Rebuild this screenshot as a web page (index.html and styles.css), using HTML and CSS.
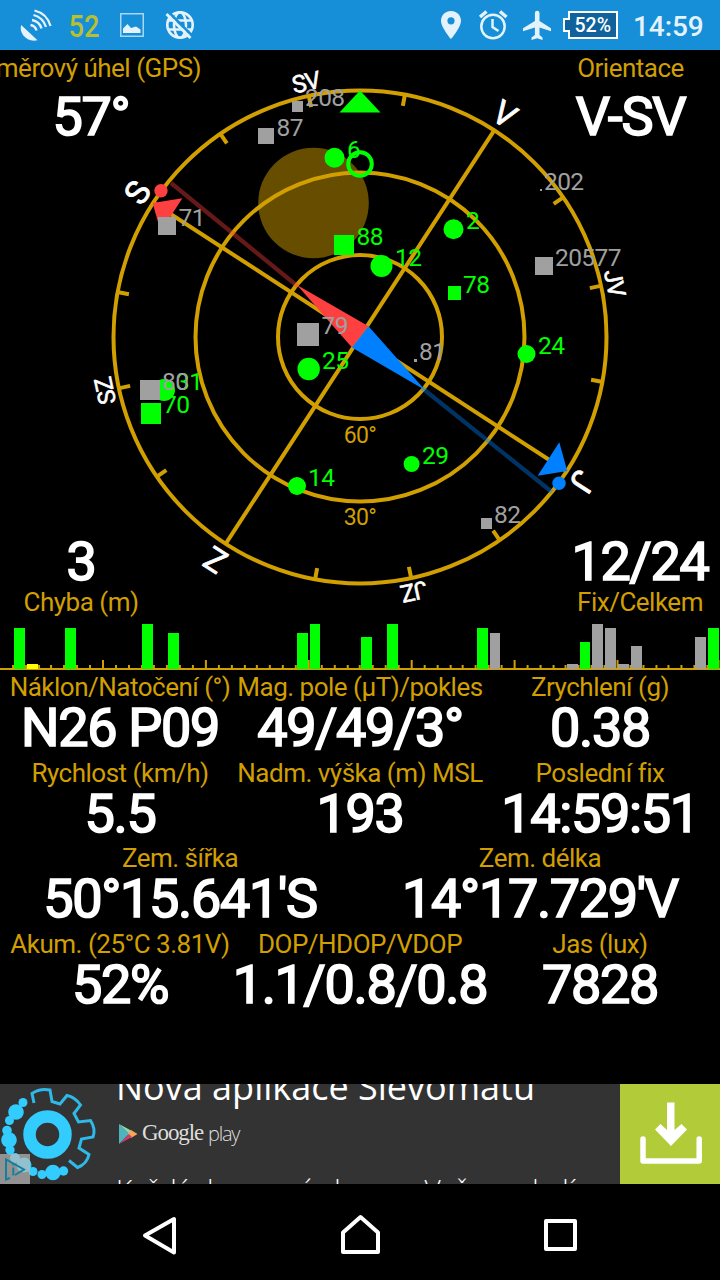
FILE: index.html
```html
<!DOCTYPE html>
<html lang="cs">
<head>
<meta charset="utf-8">
<title>GPS Status</title>
<link rel="stylesheet" href="styles.css">
</head>
<body>
<div class="screen">
  <header class="status-bar">
    <div class="notifications">
      <svg class="cell" viewBox="0 0 48 50">
        <path class="icon-fill" d="M9.200 25C6.500 33 15 43 25.500 40.200Z"/>
        <g class="icon-line arcs">
          <path d="M22.500 10.500Q35 13.500 38.500 26"/>
          <path d="M21.500 15Q31 17.500 34 27"/>
          <path d="M20 20Q27.500 21.500 29.500 28.500"/>
          <path d="M18.500 25Q23.500 26 24.500 30.500"/>
        </g>
      </svg>
      <svg class="cell" viewBox="0 0 48 50">
        <text class="level" x="8.500" y="37" textLength="31" lengthAdjust="spacingAndGlyphs">52</text>
      </svg>
      <svg class="cell" viewBox="0 0 48 50">
        <rect class="frame" x="12.750" y="13.750" width="22.500" height="22.500"/>
        <path class="icon-fill" d="M15 33V28.500L19.500 24L23 28L28 26.500L32.500 29.500V33Z"/>
      </svg>
      <svg class="cell" viewBox="0 0 48 50">
        <g class="icon-line globe">
          <circle cx="24" cy="25" r="12.700"/>
          <ellipse cx="24" cy="25" rx="6" ry="12.700"/>
          <path d="M12.500 20.500H35.500M12.500 29.500H35.500"/>
        </g>
        <path class="slash-gap" d="M12.500 12L36.500 36"/>
        <path class="slash" d="M10.500 14L34.500 38"/>
      </svg>
    </div>
    <div class="indicators">
      <svg class="cell-s" viewBox="0 0 42 50">
        <path class="icon-fill" fill-rule="evenodd" d="M21 11C15.300 11 11 15.300 11 20.700C11 27.500 21 39 21 39S31 27.500 31 20.700C31 15.300 26.700 11 21 11ZM21 17.200A3.600 3.600 0 1 1 21 24.400A3.600 3.600 0 1 1 21 17.200Z"/>
      </svg>
      <svg class="cell-s" viewBox="0 0 42 50">
        <g class="icon-line alarm">
          <circle cx="21" cy="26.500" r="11.700"/>
          <path d="M20.500 19V27L26.500 31"/>
          <path class="bells" d="M8 17L14.500 11.500M28 11.500L34.500 17"/>
        </g>
      </svg>
      <svg class="cell-m" viewBox="0 0 46 50">
        <path class="icon-fill" d="M37 31.200V28.300L25.500 21V13A2.300 2.300 0 0 0 20.900 13V21L9 28.300V31.200L20.900 27.500V35L17.500 37.500V40L23.200 38.300L28.500 40V37.500L25.500 35V27.500Z"/>
      </svg>
      <svg class="cell-l" viewBox="0 0 62 50">
        <path class="battery" d="M9 12H57V38H9V31H4V19H9Z"/>
        <text class="battery-text" x="14.500" y="32" textLength="36.500" lengthAdjust="spacingAndGlyphs">52%</text>
      </svg>
      <time class="clock">14:59</time>
    </div>
  </header>

  <section class="compass">
    <svg class="dial" viewBox="0 50 720 570">
      <circle class="sun-disc" cx="313.500" cy="203" r="55.300"/>
      <g class="ring">
        <circle cx="360" cy="337" r="246.500"/>
        <circle cx="360" cy="337" r="164.500"/>
        <circle cx="360" cy="337" r="82"/>
      </g>
      <g class="ring" transform="translate(360 337)">
        <path transform="rotate(33)" d="M0-247V247M-247 0H247"/>
        <path transform="rotate(-34.500)" d="M0-247V-235M0 247V235M-247 0H-235M247 0H235"/>
        <path transform="rotate(-12)" d="M0-247V-235M0 247V235M-247 0H-235M247 0H235"/>
        <path transform="rotate(10.500)" d="M0-247V-235M0 247V235M-247 0H-235M247 0H235"/>
      </g>
      <g class="cardinal" transform="translate(360 337)">
        <text transform="rotate(-57)" y="-254">S</text>
        <text transform="rotate(33)" y="-254">V</text>
        <text transform="rotate(123)" y="-254">J</text>
        <text transform="rotate(213)" y="-254">Z</text>
      </g>
      <g class="cardinal minor" transform="translate(360 337)">
        <text transform="rotate(-12)" y="-252">SV</text>
        <text transform="rotate(78)" y="-252">JV</text>
        <text transform="rotate(168)" y="-252">JZ</text>
        <text transform="rotate(258)" y="-252">SZ</text>
      </g>
      <g class="elevation">
        <text x="360" y="442.500">60°</text>
        <text x="360" y="524.500">30°</text>
      </g>
      <path class="beam red" d="M171 183L298 286.500"/>
      <path class="beam blue" d="M422 388L552 492"/>
      <path class="north" d="M297 285L368.500 326.300L352 347.500Z"/>
      <path class="south" d="M425 390L368.500 326.300L352 347.500Z"/>
      <path class="north" d="M152.700 203L182.300 198.300L160.700 231.700Z"/>
      <path class="south" d="M567.300 471L537.700 475.700L559.300 442.300Z"/>
      <circle class="north" cx="161" cy="190.700" r="6.700"/>
      <circle class="south" cx="559" cy="483.300" r="6.700"/>
      <g class="sat on">
        <path d="M360 90.500L380.500 112.500H339.500Z"/>
        <circle class="target" cx="360" cy="164" r="11.800"/>
        <circle cx="334.500" cy="157.700" r="10"/><text x="347" y="158">6</text>
        <rect x="334" y="235" width="20" height="20"/><text x="356.500" y="245.300">88</text>
        <circle cx="381.500" cy="266" r="11"/><text x="395" y="266">12</text>
        <circle cx="453.500" cy="229.200" r="10"/><text x="466" y="229.200">2</text>
        <rect x="448" y="286" width="13" height="14"/><text x="463" y="293">78</text>
        <circle cx="526.500" cy="354" r="9"/><text x="538" y="354.300">24</text>
        <circle cx="308.700" cy="369" r="11.200"/><text x="322" y="369">25</text>
        <circle cx="164" cy="390" r="11"/><text x="176" y="390">31</text>
        <rect x="141" y="403" width="20" height="21"/><text x="163" y="413.300">70</text>
        <circle cx="297" cy="486" r="9"/><text x="308" y="486">14</text>
        <circle cx="411.600" cy="464" r="8"/><text x="422" y="464">29</text>
      </g>
      <g class="sat off">
        <rect x="292" y="101" width="11" height="11"/><text x="305" y="106">208</text>
        <rect x="258" y="128" width="16" height="16"/><text x="276.500" y="136.200">87</text>
        <rect x="158" y="217" width="18" height="18"/><text x="178.500" y="226.300">71</text>
        <rect x="540" y="189" width="2" height="2"/><text x="544" y="190">202</text>
        <rect x="535" y="257" width="18" height="18"/><text x="555" y="266">20577</text>
        <rect x="297" y="323" width="22" height="23"/><text x="321.500" y="334">79</text>
        <rect x="414" y="359" width="3" height="3"/><text x="419" y="360">81</text>
        <rect x="140" y="380" width="20" height="20"/><text x="162" y="390">80</text>
        <rect x="481" y="518" width="11" height="11"/><text x="494" y="523.300">82</text>
      </g>
    </svg>
    <div class="corner top-left"><span class="label">Směrový úhel (GPS)</span><span class="value">57°</span></div>
    <div class="corner top-right"><span class="label">Orientace</span><span class="value">V-SV</span></div>
    <div class="corner bottom-left"><span class="value">3</span><span class="label">Chyba (m)</span></div>
    <div class="corner bottom-right"><span class="value">12/24</span><span class="label">Fix/Celkem</span></div>
  </section>

  <svg class="signal" viewBox="0 620 720 50" shape-rendering="crispEdges">
    <defs>
      <pattern id="ticks" x="102" y="620" width="102.900" height="50" patternUnits="userSpaceOnUse">
        <path class="tick" d="M0 40h2v10h-2zM12.800 45h2v5h-2zM25.700 45h2v5h-2zM38.500 45h2v5h-2zM51.400 45h2v5h-2zM64.300 45h2v5h-2zM77.200 45h2v5h-2zM90 45h2v5h-2z"/>
      </pattern>
    </defs>
    <rect x="4" y="620" width="716" height="50" fill="url(#ticks)"/>
    <rect class="tick" x="0" y="668" width="720" height="2"/>
    <path class="bar-on" d="M14 628h11v41h-11zM65 628h11v41h-11zM142 624h11v45h-11zM168 633h11v36h-11zM297 633h11v36h-11zM310 624h10v45h-10zM361 637h11v32h-11zM387 624h11v45h-11zM477 628h11v41h-11zM580 642h10v27h-10zM708 628h11v41h-11z"/>
    <path class="bar-weak" d="M27 664h11v5h-11z"/>
    <path class="bar-off" d="M490 633h10v36h-10zM567 664h11v5h-11zM592 624h11v45h-11zM605 628h11v41h-11zM618 664h11v5h-11zM631 646h11v23h-11zM695 637h11v32h-11z"/>
  </svg>

  <section class="readouts">
    <div class="row">
      <div class="item"><span class="label">Náklon/Natočení (°)</span><span class="value">N26 P09</span></div>
      <div class="item"><span class="label">Mag. pole (μT)/pokles</span><span class="value">49/49/3°</span></div>
      <div class="item"><span class="label">Zrychlení (g)</span><span class="value">0.38</span></div>
    </div>
    <div class="row">
      <div class="item"><span class="label">Rychlost (km/h)</span><span class="value">5.5</span></div>
      <div class="item"><span class="label">Nadm. výška (m) MSL</span><span class="value">193</span></div>
      <div class="item"><span class="label">Poslední fix</span><span class="value">14:59:51</span></div>
    </div>
    <div class="row">
      <div class="item"><span class="label">Zem. šířka</span><span class="value">50°15.641'S</span></div>
      <div class="item"><span class="label">Zem. délka</span><span class="value">14°17.729'V</span></div>
    </div>
    <div class="row">
      <div class="item"><span class="label">Akum. (25°C 3.81V)</span><span class="value">52%</span></div>
      <div class="item"><span class="label">DOP/HDOP/VDOP</span><span class="value">1.1/0.8/0.8</span></div>
      <div class="item"><span class="label">Jas (lux)</span><span class="value">7828</span></div>
    </div>
  </section>

  <aside class="ad">
    <svg class="ad-gear" viewBox="0 0 105 100">
      <circle class="hub" cx="47.500" cy="50.500" r="18"/>
      <path class="teeth" d="M34 19L32 9.500Q40 4 50 6L52 17.500L60 20L67 11.500Q75 13 80.500 21L74 29.500L78.500 38L90.500 36.500Q96 45 93 53L81.500 55L79 64L89 70.500Q87 80 77.500 83.500L69 76.500"/>
      <g class="beads">
        <circle cx="23" cy="18.500" r="4.500"/><circle cx="16" cy="28" r="7.800"/><circle cx="9.500" cy="36.500" r="4.500"/>
        <circle cx="7" cy="46.500" r="4.800"/><circle cx="9" cy="56" r="7.800"/><circle cx="10" cy="66" r="4.700"/>
        <circle cx="15" cy="74" r="5"/><circle cx="24" cy="81" r="7.500"/><circle cx="33" cy="87.500" r="4.500"/>
        <circle cx="42" cy="90.500" r="4.500"/><circle cx="53" cy="88.500" r="7.800"/><circle cx="63.500" cy="87" r="4.700"/>
      </g>
      <rect class="adchoices" x="0" y="70" width="30" height="30"/>
      <path class="adchoices-mark" d="M10 94L6 95.500V75.500L24 85.500L15 91M13.300 83.500V91.500M13.300 79.500V81.500"/>
    </svg>
    <div class="ad-body">
      <div class="ad-title">Nová aplikace Slevomatu</div>
      <div class="play">
        <svg class="play-mark" viewBox="0 0 20 22">
          <path fill="#4cb4bd" d="M1 1V21L11 11Z"/>
          <path fill="#8fd6ad" d="M1 1L14 8L11 11Z"/>
          <path fill="#f9a65a" d="M13 7L19.500 11L13 15L10 11Z"/>
          <path fill="#d23a6c" d="M1 21L11 11L14 14Z"/>
        </svg>
        <span class="play-google">Google</span><span class="play-word">play</span>
      </div>
      <div class="ad-text">Každý den nové slevy ve Vašem okolí</div>
    </div>
    <svg class="ad-button" viewBox="0 0 100 100">
      <path class="tray" d="M23 55V77H79.200V55"/>
      <path class="icon-arrow" d="M47 18.500H54.500V46L61.500 40L67 45.500L51 62L35 45.500L40.500 40L47 46Z"/>
    </svg>
  </aside>

  <nav class="nav-bar">
    <svg viewBox="0 0 60 60"><path d="M15 31.500L44 15V48.500Z"/></svg>
    <svg viewBox="0 0 60 60"><path d="M13 48V28.500L30.500 13L48 28.500V48Z"/></svg>
    <svg viewBox="0 0 60 60"><path d="M16 17H45V45H16Z"/></svg>
  </nav>
</div>
</body>
</html>
```

FILE: styles.css
```css
* { box-sizing: border-box; }
body { margin: 0; background: #000; font-family: Roboto, "Noto Sans", sans-serif; }
.screen { width: 720px; height: 1280px; overflow: hidden; display: flex; flex-direction: column; background: #000; }
svg { display: block; flex: none; }

.status-bar { height: 50px; display: flex; justify-content: space-between; background: #168ed8; padding-left: 12px; }
.notifications, .indicators { display: flex; }
.indicators { width: 290px; }
.cell { width: 48px; height: 50px; }
.cell-s { width: 42px; height: 50px; }
.cell-m { width: 46px; height: 50px; }
.cell-l { width: 62px; height: 50px; }
.icon-fill { fill: #e4f3fb; }
.icon-line { fill: none; stroke: #e4f3fb; }
.arcs { stroke-width: 2.300; }
.globe { stroke-width: 2.600; }
.alarm { stroke-width: 2.500; }
.bells { stroke-width: 3.500; }
.frame { fill: none; stroke: #a9d6f1; stroke-width: 1.500; }
.slash-gap { stroke: #168ed8; stroke-width: 2.500; }
.slash { stroke: #e4f3fb; stroke-width: 2.800; }
.level { font-size: 32px; font-weight: 500; fill: #b8bf30; }
.battery { fill: #0f629b; stroke: #fff; stroke-width: 2; }
.battery-text { font-size: 21px; font-weight: 500; fill: #fff; }
.clock { color: #e4f3fb; font-size: 28px; font-weight: 500; line-height: 53px; padding-left: 11px; letter-spacing: -.1px; }

.compass { position: relative; height: 570px; overflow: hidden; }
.dial { width: 720px; height: 570px; }
.sun-disc { fill: #664d00; }
.ring { fill: none; stroke: #d19f00; stroke-width: 4; }
.cardinal { font-size: 33px; fill: #fff; stroke: #fff; stroke-width: .8; text-anchor: middle; }
.minor { font-size: 24px; stroke-width: .6; letter-spacing: -.8px; }
.elevation { font-size: 23px; fill: #d19f00; text-anchor: middle; letter-spacing: -.6px; }
.beam { stroke-width: 4.200; opacity: .4; }
.red { stroke: #ff4040; }
.blue { stroke: #0080ff; }
.north { fill: #ff4040; }
.south { fill: #0080ff; }
.sat { font-size: 24.500px; letter-spacing: -.6px; }
.on { fill: #0f0; }
.off { fill: #a0a0a0; }
.target { fill: none; stroke: #0f0; stroke-width: 4; }

.label { color: #d19f00; font-size: 26px; line-height: 34px; white-space: nowrap; letter-spacing: -.5px; }
.value { color: #fff; font-size: 54px; line-height: 47px; white-space: nowrap; letter-spacing: -1.350px; -webkit-text-stroke: 1.700px #fff; }
.corner { position: absolute; display: flex; flex-direction: column; align-items: center; }
.top-left { left: 0; top: 1px; width: 182px; }
.top-right { right: 0; top: 1px; width: 179px; }
.top-left .value, .top-right .value { line-height: 64px; }
.bottom-left { left: 0; bottom: 1px; width: 162px; }
.bottom-right { right: 0; bottom: 1px; width: 160px; }

.signal { width: 720px; height: 50px; }
.tick { fill: #d19f00; }
.bar-on { fill: #0f0; }
.bar-weak { fill: #ff0; }
.bar-off { fill: #a0a0a0; }

.readouts { height: 414px; }
.row { display: flex; height: 85.500px; }
.item { flex: 1 1 0; min-width: 0; display: flex; flex-direction: column; align-items: center; }

.ad { height: 100px; display: flex; background: #333; overflow: hidden; }
.ad-gear { width: 105px; height: 100px; }
.hub { fill: none; stroke: #33ccff; stroke-width: 12.500; }
.teeth { fill: none; stroke: #2fb9e8; stroke-width: 3; }
.beads { fill: #33ccff; }
.adchoices { fill: #bbb; opacity: .7; }
.adchoices-mark { fill: none; stroke: #14809e; stroke-width: 2; }
.ad-body { flex: 1; padding-left: 11px; color: #fff; font-family: "Open Sans", "Noto Sans", sans-serif; white-space: nowrap; overflow: hidden; }
.ad-title { height: 36px; margin-top: -12px; font-size: 36px; line-height: 30px; }
.play { display: flex; align-items: center; height: 50px; color: #ddd; }
.play-mark { width: 20px; height: 22px; margin: 2px 4px 0 2px; }
.play-google { font-family: "Liberation Serif", serif; font-size: 23px; letter-spacing: -1.100px; }
.play-word { font-size: 20px; font-weight: 300; margin-left: 5px; letter-spacing: -1.300px; }
.ad-text { font-size: 28px; font-weight: 300; line-height: 38px; padding-top: 12px; }
.ad-button { width: 100px; height: 100px; background: #b2cb39; }
.tray { fill: none; stroke: #fff; stroke-width: 5.500; stroke-linejoin: round; stroke-linecap: round; }
.icon-arrow { fill: #fff; }

.nav-bar { height: 96px; display: flex; justify-content: center; gap: 140px; padding-top: 20px; }
.nav-bar svg { width: 60px; height: 60px; }
.nav-bar path { fill: none; stroke: #fff; stroke-width: 4; stroke-linejoin: round; }
```
